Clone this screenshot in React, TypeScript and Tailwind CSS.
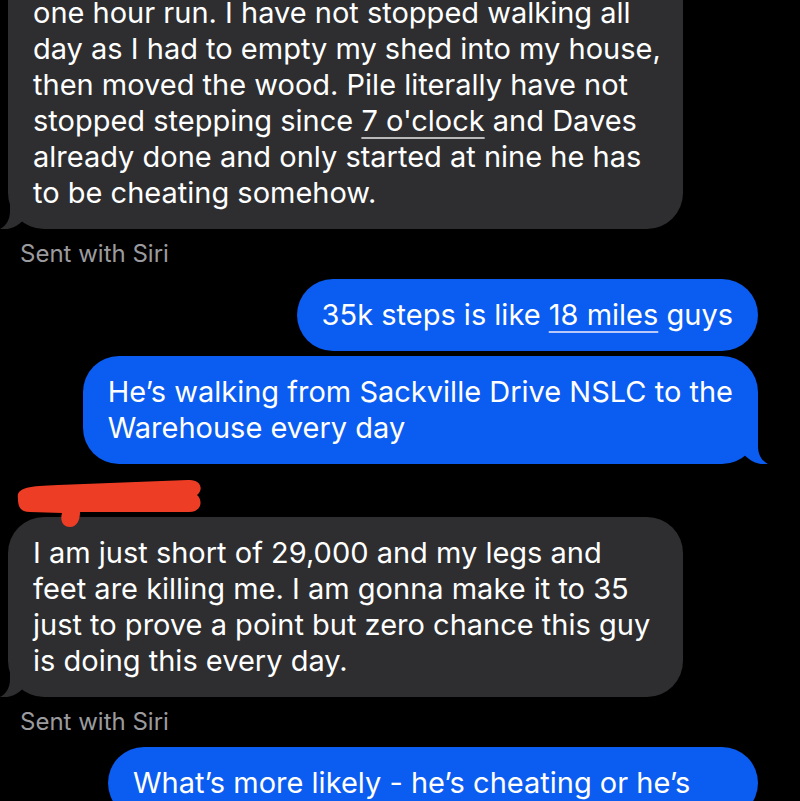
import React from 'react';

type Line = React.ReactNode;

const grayLink = 'underline decoration-[#b9b9b9] decoration-[1.5px] underline-offset-[6px]';
const blueLink = 'underline decoration-[#b8c8f8] decoration-[1.5px] underline-offset-[6px]';

function Lines({ lines }: { lines: Line[] }) {
  return (
    <>
      {lines.map((l, i) => (
        <span key={i} className="block whitespace-nowrap">
          {l}
        </span>
      ))}
    </>
  );
}

function TailLeft() {
  return (
    <svg className="absolute bottom-0 left-[-8px] h-[36px] w-[30px]" viewBox="0 0 30 36">
      <path d="M10 0 L10 18 C10 27 6 33 0 36 C7 37 14 35 19 31 L30 22 L30 0 Z" fill="#2e2e30" />
    </svg>
  );
}

function TailRight() {
  return (
    <svg className="absolute bottom-0 right-[-10px] h-[36px] w-[30px]" viewBox="0 0 30 36">
      <path d="M20 0 L20 18 C20 27 24 33 30 36 C23 37 16 35 11 31 L0 22 L0 0 Z" fill="#0b5cf0" />
    </svg>
  );
}

function Incoming({ lines, className = '' }: { lines: Line[]; className?: string }) {
  return (
    <div className={`relative ml-[8px] w-[675px] rounded-[36px] bg-[#2e2e30] px-[25px] pb-[18px] text-[29px] leading-[36px] text-white ${className}`}>
      <Lines lines={lines} />
      <TailLeft />
    </div>
  );
}

function Outgoing({ lines, tail, className = '' }: { lines: Line[]; tail?: boolean; className?: string }) {
  return (
    <div className={`relative mr-[42px] self-end rounded-[36px] bg-[#0b5cf0] px-[25px] py-[18px] text-[29px] leading-[36px] text-white ${className}`}>
      <Lines lines={lines} />
      {tail && <TailRight />}
    </div>
  );
}

function SentWithSiri({ className = '' }: { className?: string }) {
  return <div className={`ml-[20px] mt-[12px] text-[24px] leading-[26px] text-[#9b9b9f] ${className}`}>Sent with Siri</div>;
}

export default function App() {
  return (
    <div className="h-[801px] w-[800px] overflow-hidden bg-black" style={{ fontFamily: 'Inter, "Noto Sans", sans-serif' }}>
      <div className="mt-[-60px] flex flex-col">
        <Incoming
          className="pt-[55px]"
          lines={[
            'one hour run. I have not stopped walking all',
            'day as I had to empty my shed into my house,',
            'then moved the wood. Pile literally have not',
            <>
              stopped stepping since <span className={grayLink}>7 o'clock</span> and Daves
            </>,
            'already done and only started at nine he has',
            'to be cheating somehow.',
          ]}
        />
        <SentWithSiri />

        <Outgoing
          className="mt-[12px] w-fit"
          lines={[
            <>
              35k steps is like <span className={blueLink}>18 miles</span> guys
            </>,
          ]}
        />
        <Outgoing
          className="mt-[5px] w-fit"
          tail
          lines={['He’s walking from Sackville Drive NSLC to the', 'Warehouse every day']}
        />

        {/* redacted sender name */}
        <div className="relative z-10 mt-[13px] h-[40px]">
          <svg className="absolute left-0 top-0 h-[52px] w-[210px]" viewBox="0 0 210 52">
            <path
              d="M18 22 C16 11 27 9 58 8 L188 3 C201 2 204 13 197 18 C203 23 202 35 189 35 L80 35 C80 43 77 50 70 50 C62 50 60 43 62 36 L30 35 C20 35 18 29 18 22 Z"
              fill="#ee3d25"
            />
          </svg>
        </div>

        <Incoming
          className="pt-[18px]"
          lines={[
            'I am just short of 29,000 and my legs and',
            'feet are killing me. I am gonna make it to 35',
            'just to prove a point but zero chance this guy',
            'is doing this every day.',
          ]}
        />
        <SentWithSiri />

        <Outgoing className="mt-[12px] w-[650px]" lines={['What’s more likely - he’s cheating or he’s']} />
      </div>
    </div>
  );
}
